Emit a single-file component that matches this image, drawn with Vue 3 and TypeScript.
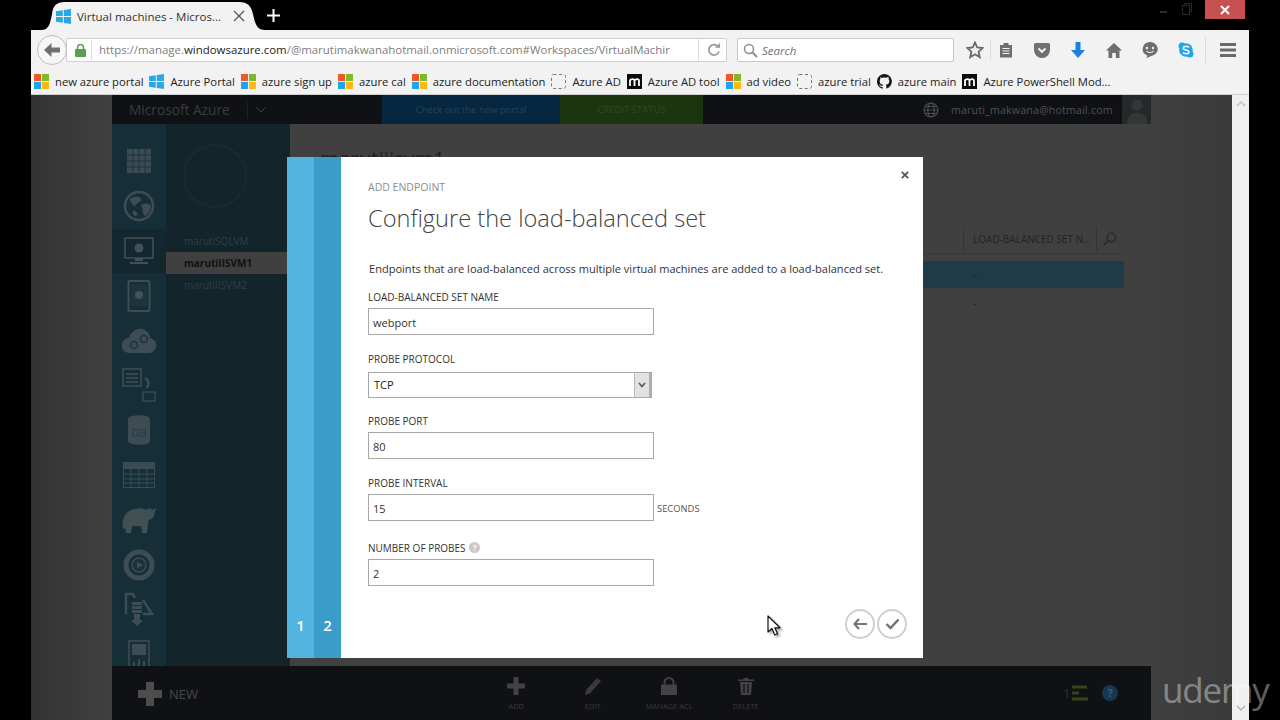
<script setup lang="ts">
interface Bookmark { icon: string; label: string }
const bookmarks: Bookmark[] = [
  { icon: 'ms', label: 'new azure portal' },
  { icon: 'win', label: 'Azure Portal' },
  { icon: 'ms', label: 'azure sign up' },
  { icon: 'ms', label: 'azure cal' },
  { icon: 'ms', label: 'azure documentation' },
  { icon: 'dash', label: 'Azure AD' },
  { icon: 'm', label: 'Azure AD tool' },
  { icon: 'ms', label: 'ad video' },
  { icon: 'dash', label: 'azure trial' },
  { icon: 'gh', label: 'azure main' },
  { icon: 'm', label: 'Azure PowerShell Mod...' },
]
const vms = ['marutiSQLVM', 'marutiIISVM1', 'marutiIISVM2']
</script>

<template>
  <div class="page">
    <div class="tabstrip">
      <div class="tab">
        <svg class="win" width="15" height="15" viewBox="0 0 15 15"><path fill="#29a8e8" d="M0 2.2 6.8 1.2V7H0zM7.8 1 15 0V7H7.8zM0 8H6.8V13.8L0 12.8zM7.8 8H15V15L7.8 14z" /></svg>
        <span class="tab-title">Virtual machines - Micros...</span>
        <svg class="tab-x" width="12" height="12" viewBox="0 0 12 12"><path d="M1 1 11 11M11 1 1 11" stroke="#555" stroke-width="1.3" /></svg>
      </div>
      <svg class="newtab" width="13" height="13" viewBox="0 0 13 13"><path d="M6.5 0V13M0 6.5H13" stroke="#fff" stroke-width="2" /></svg>
      <div class="winctl">
        <span class="min"></span>
        <svg class="restore" width="10" height="12" viewBox="0 0 10 12"><path d="M2.5 2.5V.5H9.5V9H7.5M.5 2.5H7.5V11.5H.5Z" fill="none" stroke="#2c2c2c" /></svg>
        <div class="close">
          <svg width="10" height="10" viewBox="0 0 10 10"><path d="M1 1 9 9M9 1 1 9" stroke="#fff" stroke-width="2" /></svg>
        </div>
      </div>
    </div>

    <div class="browser">
      <div class="toolbar">
        <div class="back">
          <svg width="16" height="14" viewBox="0 0 16 14"><path d="M7.5 0 0 7l7.500 7V9.500H16v-5H7.500z" fill="#6f6f6f" /></svg>
        </div>
        <div class="urlbar">
          <svg class="lock" width="11" height="13" viewBox="0 0 11 13"><path d="M2.500 5.500V3.500a3 3 0 0 1 6 0v2" fill="none" stroke="#57a04a" stroke-width="1.500" /><rect y="5" width="11" height="8" rx="1" fill="#57a04a" /></svg>
          <span class="url"><span class="url-dim">https://manage.</span><span class="url-dark">windowsazure.com</span><span class="url-dim">/@marutimakwanahotmail.onmicrosoft.com#Workspaces/VirtualMachir</span></span>
          <div class="reload">
            <svg width="14" height="14" viewBox="0 0 14 14"><path d="M11.500 4.200A5.200 5.200 0 1 0 12 8.500" fill="none" stroke="#9a9a9a" stroke-width="1.800" /><path d="M8 4.800h5V0z" fill="#9a9a9a" /></svg>
          </div>
        </div>
        <div class="searchbox">
          <svg width="15" height="15" viewBox="0 0 15 15"><circle cx="6" cy="6" r="4.500" fill="none" stroke="#8c8c8c" stroke-width="1.500" /><path d="M9.500 9.500 14 14" stroke="#8c8c8c" stroke-width="2" /></svg>
          <span>Search</span>
        </div>
        <div class="tools">
          <svg width="18" height="18" viewBox="0 0 18 18"><path d="M9 1.500 11.200 6.500 16.700 7 12.600 10.700 13.800 16.200 9 13.300 4.200 16.200 5.400 10.700 1.300 7 6.800 6.500Z" fill="none" stroke="#666" stroke-width="1.800" /></svg>
          <span class="tsep"></span>
          <svg class="t-clip" width="14" height="16" viewBox="0 0 14 16"><path d="M1 3H4.500V1H9.500V3H13V15.500H1Z" fill="#6e6e6e" /><path d="M3.500 6.500h7M3.500 9h7M3.500 11.500h7" stroke="#f2f2f2" /></svg>
          <svg class="t-pocket" width="16" height="15" viewBox="0 0 16 15"><path d="M1.500 0h13A1.500 1.500 0 0 1 16 1.500V7a8 8 0 0 1-16 0V1.500A1.500 1.500 0 0 1 1.500 0Z" fill="#707070" /><path d="M4.500 5.500 8 8.800 11.500 5.500" fill="none" stroke="#f2f2f2" stroke-width="2" /></svg>
          <svg class="t-dl" width="14" height="16" viewBox="0 0 14 16"><path d="M4.500 0h5v8H14L7 16 0 8h4.500z" fill="#1f7fe0" /></svg>
          <svg class="t-home" width="16" height="15" viewBox="0 0 16 15"><path d="M8 0 16 7.500H13.500V15H9.800V10H6.200V15H2.500V7.500H0Z" fill="#6e6e6e" /></svg>
          <svg class="t-chat" width="16" height="16" viewBox="0 0 16 16"><path d="M8 0a7.500 7 0 0 1 2 13.800L4.500 16l.7-2.600A7.500 7 0 0 1 8 0Z" fill="#6e6e6e" /><circle cx="5" cy="6" r="1.200" fill="#f2f2f2" /><circle cx="11" cy="6" r="1.200" fill="#f2f2f2" /><path d="M4.500 9c1.500 2 5.500 2 7 0" fill="none" stroke="#f2f2f2" stroke-width="1.200" /></svg>
          <svg class="t-skype" width="16" height="16" viewBox="0 0 16 16"><circle cx="8" cy="8" r="6.800" fill="#22a6e8" /><circle cx="4" cy="4" r="3.500" fill="#22a6e8" /><circle cx="12" cy="12" r="3.500" fill="#22a6e8" /><path d="M11 5.500C9.500 3.800 5.200 4 5.200 6.200 5.200 8.500 11 7.400 11 10 11 12.200 6.500 12.200 5 10.500" fill="none" stroke="#fff" stroke-width="1.500" /></svg>
          <span class="tsep tsep2"></span>
          <svg class="t-menu" width="16" height="14" viewBox="0 0 16 14"><path d="M0 0H16V3H0ZM0 5.500H16V8.500H0ZM0 11H16V14H0Z" fill="#6a6a6a" /></svg>
        </div>
      </div>

      <div class="bookmarks">
        <div v-for="b in bookmarks" :key="b.label" class="bm">
          <svg v-if="b.icon === 'ms'" width="15" height="15" viewBox="0 0 15 15"><rect width="7" height="7" fill="#f0582a" /><rect x="8" width="7" height="7" fill="#7cba2a" /><rect y="8" width="7" height="7" fill="#21a4ee" /><rect x="8" y="8" width="7" height="7" fill="#fdb913" /></svg>
          <svg v-else-if="b.icon === 'win'" width="15" height="15" viewBox="0 0 15 15"><path fill="#29a8e8" d="M0 2.200 6.800 1.200V7H0zM7.800 1 15 0V7H7.800zM0 8H6.800V13.800L0 12.800zM7.800 8H15V15L7.800 14z" /></svg>
          <svg v-else-if="b.icon === 'dash'" width="15" height="15" viewBox="0 0 15 15"><rect x=".5" y=".5" width="14" height="14" rx="2" fill="none" stroke="#777" stroke-dasharray="3 2.500" /></svg>
          <svg v-else-if="b.icon === 'm'" width="15" height="15" viewBox="0 0 15 15"><rect width="15" height="15" fill="#0b0b0b" /><path d="M3 12V5.500M3 6.500C4 4.500 7.500 4.500 7.500 7V12M7.500 7C8.500 4.500 12 4.500 12 7V12" fill="none" stroke="#fff" stroke-width="1.800" /></svg>
          <svg v-else width="15" height="15" viewBox="0 0 16 16"><path fill="#161616" d="M8 0a8 8 0 0 0-2.500 15.600c.4.100.5-.2.500-.4v-1.400c-2.200.5-2.700-1-2.700-1-.4-.9-.9-1.200-.9-1.200-.7-.5.100-.5.100-.5.800.1 1.200.8 1.200.8.700 1.200 1.900.9 2.300.7.100-.5.300-.9.500-1.100-1.800-.2-3.600-.9-3.600-4 0-.9.300-1.600.8-2.100-.1-.2-.4-1 .1-2.100 0 0 .7-.2 2.200.8a7.600 7.600 0 0 1 4 0c1.500-1 2.200-.8 2.200-.8.500 1.100.2 1.900.1 2.100.5.600.8 1.300.8 2.100 0 3.100-1.900 3.700-3.700 3.900.3.300.6.700.6 1.500v2.200c0 .2.100.5.600.4A8 8 0 0 0 8 0Z" /></svg>
          <span>{{ b.label }}</span>
        </div>
      </div>

      <div class="viewport">
        <div class="gutter gutter-l"></div>
        <div class="portal">
          <header class="azure-head">
            <span class="brand">Microsoft Azure</span>
            <span class="brand-sep"></span>
            <svg class="chev" width="10" height="6" viewBox="0 0 10 6"><path d="M.5.500 5 5 9.500.500" fill="none" stroke="#3a4a50" /></svg>
            <div class="promo promo-blue">Check out the new portal</div>
            <div class="promo promo-green">CREDIT STATUS</div>
            <div class="head-right">
              <svg width="16" height="16" viewBox="0 0 16 16"><g fill="none" stroke="#4a4c4e" stroke-width="1.200"><circle cx="8" cy="8" r="7" /><ellipse cx="8" cy="8" rx="3.200" ry="7" /><path d="M1 8H15M2 4.500H14M2 11.500H14" /></g></svg>
              <span class="email">maruti_makwana@hotmail.com</span>
              <div class="avatar">
                <svg width="24" height="28" viewBox="0 0 24 28"><circle cx="12" cy="9" r="5.500" fill="#343738" /><path d="M2 28c0-9 4-11 10-11s10 2 10 11z" fill="#343738" /></svg>
              </div>
            </div>
          </header>

          <div class="portal-main">
            <nav class="nav">
              <div class="nav-item">
                <svg width="26" height="26" viewBox="0 0 28 28"><path fill="#4d5a5e" d="M1 1h26v26H1z" /><path d="M7.500 1v26M14 1v26M20.500 1v26M1 7.500h26M1 14h26M1 20.500h26" stroke="#1b3540" /></svg>
              </div>
              <div class="nav-item">
                <svg width="32" height="32" viewBox="0 0 32 32"><circle cx="16" cy="16" r="14" fill="none" stroke="#505d61" stroke-width="2.500" /><path fill="#505d61" d="M7 9c4-3 9-3 11 0 1 3-4 3-5 6-2 2-5-1-6-6ZM18 15c3-2 8-2 10 1 0 4-3 9-6 10-3-2-2-7-4-11ZM10 21c2-1 4 1 5 4l-3 1c-2-1-3-3-2-5Z" /></svg>
              </div>
              <div class="nav-item nav-active">
                <svg width="30" height="28" viewBox="0 0 30 28"><rect x="1" y="1" width="28" height="20" fill="none" stroke="#59666a" stroke-width="1.500" /><circle cx="15" cy="11" r="4.500" fill="#59666a" /><path d="M11 21h8v3h-8zM6 25h18v2H6z" fill="#59666a" /></svg>
              </div>
              <div class="nav-item">
                <svg width="24" height="32" viewBox="0 0 24 32"><rect x="1.500" y="1" width="21" height="30" rx="1.500" fill="none" stroke="#505d61" stroke-width="2" /><rect x="4" y="4" width="16" height="22" fill="#22383f" /><circle cx="12" cy="15" r="4" fill="#59666a" /></svg>
              </div>
              <div class="nav-item">
                <svg width="36" height="28" viewBox="0 0 36 28"><path fill="#505d61" d="M9 26C3 26 0 22 1 17 2 13 5 11 8 11 10 5 15 1 21 2 26 3 29 7 29 11 33 12 36 15 35 20 34 24 31 26 27 26Z" /><circle cx="13" cy="18" r="3.500" fill="none" stroke="#1b3540" stroke-width="1.500" /><circle cx="23" cy="12" r="3.500" fill="none" stroke="#1b3540" stroke-width="1.500" /></svg>
              </div>
              <div class="nav-item">
                <svg width="34" height="34" viewBox="0 0 34 34"><rect x="1" y="1" width="18" height="17" fill="none" stroke="#505d61" stroke-width="1.500" /><path d="M4 6h12M4 10h12M4 14h12" stroke="#505d61" stroke-width="1.500" /><rect x="21" y="24" width="12" height="9" fill="none" stroke="#505d61" stroke-width="1.300" /><path d="M23 10c4 2 4 6 2 10" fill="none" stroke="#505d61" stroke-width="2.500" /></svg>
              </div>
              <div class="nav-item">
                <svg width="24" height="32" viewBox="0 0 24 32"><path fill="#4e5b5f" d="M1 5c0-5 22-5 22 0v22c0 5-22 5-22 0Z" /><text x="12" y="23" text-anchor="middle" class="db">DB</text></svg>
              </div>
              <div class="nav-item">
                <svg width="32" height="26" viewBox="0 0 32 26"><rect x=".5" y=".5" width="31" height="25" fill="none" stroke="#4d5a5e" /><rect x="1" y="1" width="30" height="6" fill="#4d5a5e" /><path d="M1 12h30M1 17h30M1 21h30M8 7v18M16 7v18M24 7v18" stroke="#4d5a5e" /></svg>
              </div>
              <div class="nav-item">
                <svg width="36" height="30" viewBox="0 0 36 30"><path fill="#56615f" d="M2 24C0 14 5 5 14 4 18 3 22 3 25 5 27 3 30 3 31 5L35 3 33 10C33 13 30 14 28 15L27 17 26 28H21L20 21H11L10 28H5L4 23Z" /></svg>
              </div>
              <div class="nav-item">
                <svg width="32" height="32" viewBox="0 0 32 32"><circle cx="16" cy="16" r="13" fill="none" stroke="#505d61" stroke-width="5" /><circle cx="16" cy="16" r="7" fill="#1b3540" stroke="#505d61" stroke-width="1.500" /><path d="M14 12.500 20 16l-6 3.500z" fill="#505d61" /></svg>
              </div>
              <div class="nav-item">
                <svg width="30" height="34" viewBox="0 0 30 34"><path fill="none" stroke="#505d61" stroke-width="2.500" d="M2 22V2H9L11 6M19 8 28 22H19" /><path fill="#505d61" d="M8 10h10v3H8zM8 14h10v3H8zM8 18h10v3H8zM10 22h6v6h3l-6 6-6-6h3z" /></svg>
              </div>
              <div class="nav-item">
                <svg width="22" height="28" viewBox="0 0 22 28"><rect x="1" y="1" width="20" height="27" fill="none" stroke="#505d61" stroke-width="1.500" /><rect x="4" y="4" width="14" height="11" fill="#505d61" /><path d="M6 26v-4M11 26v-7M16 26v-5" stroke="#505d61" stroke-width="2" /></svg>
              </div>
            </nav>

            <aside class="sublist">
              <div class="ring"></div>
              <div class="vm-list">
                <div v-for="vm in vms" :key="vm" class="vm" :class="{ 'vm-on': vm === 'marutiIISVM1' }">{{ vm }}</div>
              </div>
            </aside>

            <main class="content">
              <h1 class="vm-title">marutiiisvm1</h1>
              <div class="thead">
                <span class="th-cell">LOAD-BALANCED SET N...</span>
                <svg width="14" height="14" viewBox="0 0 14 14"><circle cx="8.500" cy="5.500" r="4.200" fill="none" stroke="#2a2a2a" stroke-width="1.500" /><path d="M5.500 8.500 1 13" stroke="#2a2a2a" stroke-width="2.200" /></svg>
              </div>
              <div class="trow trow-on"><span>-</span></div>
              <div class="trow"><span>-</span></div>
            </main>
          </div>

          <footer class="actionbar">
            <div class="new">
              <svg width="24" height="24" viewBox="0 0 24 24"><path d="M8 0h8v8h8v8h-8v8H8v-8H0V8h8z" fill="#4d4d4e" /></svg>
              <span>NEW</span>
            </div>
            <div class="actions">
              <div class="action action-add">
                <svg width="18" height="18" viewBox="0 0 18 18"><path d="M6.500 0h5v6.500H18v5h-6.500V18h-5v-6.500H0v-5h6.500z" fill="#434345" /></svg>
                <span>ADD</span>
              </div>
              <div class="action action-edit">
                <svg width="18" height="18" viewBox="0 0 18 18"><path d="M13 1 17 4 6 16.500 1 18 2 13Z" fill="#3a3a3c" /></svg>
                <span>EDIT</span>
              </div>
              <div class="action action-acl">
                <svg width="18" height="18" viewBox="0 0 18 18"><path d="M4.500 8V5.500a4.500 4.500 0 0 1 9 0V8" fill="none" stroke="#434345" stroke-width="2" /><rect x="1" y="7.500" width="16" height="10.500" fill="#434345" /></svg>
                <span>MANAGE ACL</span>
              </div>
              <div class="action action-del">
                <svg width="16" height="18" viewBox="0 0 16 18"><path d="M0 2.500h5.500V1h5v1.500H16V4H0zM2 5h12l-1 13H3z" fill="#434345" /><path d="M6 7v9M10 7v9" stroke="#101114" stroke-width="1.300" /></svg>
                <span>DELETE</span>
              </div>
            </div>
            <div class="foot-right">
              <span class="count">1</span>
              <svg width="16" height="16" viewBox="0 0 16 16"><path d="M0 2h15M0 8h7M0 14h16" stroke="#38451c" stroke-width="3" /></svg>
              <span class="help">?</span>
            </div>
          </footer>
        </div>
        <div class="gutter gutter-r"></div>
        <div class="scrollbar">
          <svg width="10" height="6" viewBox="0 0 10 6"><path d="M1 5 5 1l4 4" fill="none" stroke="#c4c4c4" stroke-width="1.500" /></svg>
          <svg width="10" height="6" viewBox="0 0 10 6"><path d="M1 1l4 4 4-4" fill="none" stroke="#b4b4b4" stroke-width="1.500" /></svg>
        </div>

        <section class="modal">
          <div class="step step-1"><span>1</span></div>
          <div class="step step-2"><span>2</span></div>
          <div class="modal-body">
            <button class="modal-x" type="button" aria-label="Close">
              <svg width="8" height="8" viewBox="0 0 8 8"><path d="M.8.800 7.200 7.200M7.200.800.800 7.200" stroke="#555" stroke-width="1.800" /></svg>
            </button>
            <div class="eyebrow">ADD ENDPOINT</div>
            <h2 class="heading">Configure the load-balanced set</h2>
            <p class="lead">Endpoints that are load-balanced across multiple virtual machines are added to a load-balanced set.</p>

            <div class="field">
              <label>LOAD-BALANCED SET NAME</label>
              <div class="input">webport</div>
            </div>
            <div class="field field-select">
              <label>PROBE PROTOCOL</label>
              <div class="select">
                <span class="select-val">TCP</span>
                <span class="select-btn">
                  <svg width="8" height="6" viewBox="0 0 8 6"><path d="M1 1 4 4.500 7 1" fill="none" stroke="#555" stroke-width="1.600" /></svg>
                </span>
              </div>
            </div>
            <div class="field">
              <label>PROBE PORT</label>
              <div class="input">80</div>
            </div>
            <div class="field field-wide">
              <label>PROBE INTERVAL</label>
              <div class="input-row">
                <div class="input">15</div>
                <span class="unit">SECONDS</span>
              </div>
            </div>
            <div class="field">
              <label class="label-help">NUMBER OF PROBES <span class="q">?</span></label>
              <div class="input">2</div>
            </div>

            <div class="modal-foot">
              <button class="round" type="button" aria-label="Back">
                <svg width="14" height="12" viewBox="0 0 14 12"><path d="M6 1 1.500 6 6 11M2 6H14" fill="none" stroke="#777" stroke-width="2.200" /></svg>
              </button>
              <button class="round" type="button" aria-label="Finish">
                <svg width="15" height="12" viewBox="0 0 15 12"><path d="M1.500 6 5.500 10 13.500 1.500" fill="none" stroke="#6f6f6f" stroke-width="2.400" /></svg>
              </button>
            </div>
          </div>
        </section>

        <svg class="cursor" width="16" height="22" viewBox="0 0 16 22"><path d="M1 1V17L5 13.500 7.800 20 10.500 18.800 7.800 12.800H13Z" fill="#fff" stroke="#111" stroke-width="1.200" stroke-linejoin="round" /></svg>
      </div>
    </div>
    <div class="watermark">udemy</div>
  </div>
</template>

<style scoped>
.page { position: relative; width: 1280px; height: 720px; overflow: hidden; background: #000; font-family: "Open Sans", "Liberation Sans", sans-serif; display: flex; flex-direction: column; }
.tabstrip { height: 30px; display: flex; align-items: flex-start; padding-left: 41px; flex: none; }
.tab { width: 224px; height: 30px; display: flex; align-items: center; padding: 2px 0 0 15px; box-sizing: border-box; background: #f2f2f2; clip-path: path("M0 30C8 30 9 24 11 14 12 6 15 2 24 2H198C207 2 210 6 212 14 214 24 216 30 224 30Z"); }
.win { flex: none; }
.tab-title { margin-left: 6px; font-size: 11.500px; color: #333; white-space: nowrap; width: 156px; }
.tab-x { margin-left: 0; }
.newtab { margin: 9px 0 0 2px; }
.winctl { margin-left: auto; margin-right: 35px; display: flex; align-items: flex-start; }
.min { width: 7px; height: 2px; background: #2c2c2c; margin: 11px 15px 0 0; }
.restore { margin: 3px 13px 0 0; }
.close { width: 40px; height: 19px; background: #c75050; display: flex; align-items: center; justify-content: center; }

.browser { width: 1218px; height: 690px; margin-left: 31px; position: relative; background: #f2f2f2; display: flex; flex-direction: column; overflow: hidden; }
.toolbar { height: 38px; flex: none; display: flex; align-items: flex-start; padding: 8px 0 0 6px; box-sizing: border-box; position: relative; }
.back { width: 30px; height: 30px; margin-top: -3px; border-radius: 50%; border: 1px solid #bdbdbd; box-sizing: border-box; background: #f6f6f6; display: flex; align-items: center; justify-content: center; flex: none; z-index: 1; }
.urlbar { width: 661px; height: 24px; margin-left: -1px; padding-left: 8px; box-sizing: border-box; border: 1px solid #cfcfcf; border-radius: 2px; background: #fff; display: flex; align-items: center; flex: none; }
.lock { flex: none; }
.url { margin-left: 5px; padding-left: 7px; border-left: 1px solid #dcdcdc; font-size: 11.450px; line-height: 20px; color: #7d7d7d; white-space: nowrap; width: 573px; overflow: hidden; box-sizing: content-box; flex: none; }
.url-dark { color: #222; }
.reload { width: 30px; height: 22px; margin-left: 26px; box-sizing: border-box; border-left: 1px solid #dcdcdc; display: flex; align-items: center; justify-content: center; flex: none; }
.searchbox { width: 217px; height: 24px; margin-left: 10px; padding-left: 5px; box-sizing: border-box; border: 1px solid #c8c8c8; border-radius: 2px; background: #fff; display: flex; align-items: center; gap: 4px; color: #6f6f6f; font-size: 11.500px; font-style: italic; flex: none; }
.tools { display: flex; align-items: center; height: 24px; margin-left: 12px; flex: none; }
.tsep { width: 1px; height: 20px; background: #dadada; margin: 0 8px 0 6px; }
.t-clip { margin-right: 21px; }
.t-pocket { margin-right: 21px; }
.t-dl { margin-right: 21px; }
.t-home { margin-right: 20px; }
.t-chat { margin-right: 20px; }
.t-skype { margin-right: 0; }
.tsep2 { margin: 0 14px 0 11px; height: 26px; }

.bookmarks { flex: none; border-bottom: 1px solid #cfcfcf; display: flex; align-items: center; gap: 6px; padding: 1px 0 0 3px; box-sizing: border-box; height: 27px; font-size: 11.250px; color: #222; }
.bm { display: flex; align-items: center; gap: 6px; white-space: nowrap; }
.bm svg { flex: none; }

.viewport { position: relative; flex: 1; display: flex; min-height: 0; background: #3f3f3f; }
.gutter { width: 81px; flex: none; }
.gutter-l { background: linear-gradient(90deg, #333 0, #404040 100%); }
.gutter-r { background: linear-gradient(90deg, #3f3f3f 0, #3a3a3a 100%); }
.portal { width: 1039px; flex: none; display: flex; flex-direction: column; background: #404040; }
.azure-head { height: 29px; flex: none; background: #101115; display: flex; align-items: center; position: relative; }
.brand { margin-left: 17px; font-size: 13.700px; color: #393c3f; width: 103px; white-space: nowrap; }
.brand-sep { width: 1px; height: 16px; background: #1e2024; margin-left: 15px; }
.chev { margin-left: 8px; }
.promo { height: 29px; display: flex; align-items: center; justify-content: center; font-size: 9.500px; flex: none; }
.promo-blue { margin-left: 116px; width: 178px; background: #072741; color: #284358; }
.promo-green { width: 143px; background: #1b350f; color: #304a25; }
.head-right { margin-left: auto; display: flex; align-items: center; }
.email { margin-left: 12px; font-size: 10.600px; color: #4e5154; width: 161px; white-space: nowrap; letter-spacing: .2px; }
.avatar { width: 29px; height: 29px; margin-left: 10px; background: #26292a; display: flex; align-items: flex-end; justify-content: center; }

.portal-main { flex: 1; min-height: 0; display: flex; }
.nav { width: 54px; flex: none; background: #162e38; display: flex; flex-direction: column; overflow: hidden; padding-top: 15px; box-sizing: border-box; }
.nav-item { height: 44.800px; flex: none; display: flex; align-items: center; justify-content: center; }
.nav-item svg { opacity: .68; }
.nav-active { background: #13272f; }
.db { font: 11px "Open Sans", sans-serif; fill: #2a4248; }
.sublist { width: 124px; flex: none; background: #13242b; position: relative; }
.ring { position: absolute; left: 17px; top: 20px; width: 64px; height: 64px; border-radius: 50%; border: 2px solid #182b33; box-sizing: border-box; }
.vm-list { padding-top: 106px; }
.vm { height: 22px; line-height: 22px; padding-left: 18px; font-size: 10px; color: #2b424c; }
.vm-on { background: #404040; color: #111; font-weight: 700; }
.content { flex: 1; min-width: 0; padding: 19px 27px 0 30px; box-sizing: border-box; color: #222; }
.vm-title { margin: 0 0 52px; font-size: 20.500px; line-height: 30px; font-weight: 400; color: #1f1f1f; }
.thead { height: 28px; display: flex; align-items: center; justify-content: flex-end; gap: 6px; padding-right: 7px; border-bottom: 2px solid #3b3b3b; font-size: 10px; color: #222; white-space: nowrap; }
.th-cell { padding: 5px 5px 5px 9px; border-left: 1px solid #353535; border-right: 1px solid #353535; white-space: nowrap; }
.trow { height: 27px; display: flex; align-items: center; padding-left: 653px; font-size: 11px; color: #222; }
.trow-on { background: #1f3b48; margin-top: 6px; margin-bottom: 1px; }

.actionbar { height: 54px; flex: none; background: #101114; display: flex; position: relative; }
.new { display: flex; align-items: center; margin-left: 26px; gap: 7px; font-size: 13px; color: #47484a; height: 56px; }
.actions { display: flex; margin-left: 280px; }
.action { display: flex; flex-direction: column; align-items: center; padding-top: 11px; gap: 5px; font-size: 7.500px; color: #38393b; width: 76.500px; line-height: 12px; }
.foot-right { display: flex; align-items: center; margin-left: auto; margin-right: 33px; color: #2f3a1e; font-size: 12px; gap: 2px; }
.help { width: 16px; height: 16px; margin-left: 12px; border-radius: 50%; background: #143752; color: #3f6080; font-size: 11px; line-height: 16px; text-align: center; font-weight: 700; }

.scrollbar { width: 17px; flex: none; background: #f0f0f0; display: flex; flex-direction: column; justify-content: space-between; align-items: center; padding: 6px 0 9px; box-sizing: border-box; }

.modal { position: absolute; left: 256px; top: 62px; width: 636px; height: 501px; display: flex; background: #fff; color: #333; }
.step { width: 27px; flex: none; display: flex; align-items: flex-end; justify-content: center; padding-bottom: 24px; box-sizing: border-box; color: #fff; font-size: 15px; font-weight: 600; line-height: 18px; }
.step-1 { background: #54b4e0; }
.step-2 { background: #3a9cca; }
.modal-body { flex: 1; position: relative; display: flex; flex-direction: column; padding: 22px 16px 19px 27px; box-sizing: border-box; min-width: 0; }
.modal-x { position: absolute; top: 14px; right: 14px; width: 8px; height: 8px; padding: 0; border: 0; background: none; display: flex; }
.eyebrow { font-size: 10.500px; line-height: 16px; color: #8c8c8c; }
.heading { margin: 6px 0 0; font-size: 23.600px; line-height: 34px; font-weight: 300; color: #444; white-space: nowrap; }
.lead { margin: 26px 0 0 1px; font-size: 11.050px; line-height: 16px; color: #333; white-space: nowrap; }
.field { margin-top: 12px; margin-bottom: 4px; }
.field + .field { margin-top: 12px; }
.field-wide { margin-bottom: 7px; }
.field label { display: block; font-size: 10px; line-height: 16px; color: #333; margin-bottom: 3px; }
.label-help { white-space: nowrap; }
.q { display: inline-block; width: 11px; height: 11px; margin-left: 1px; border-radius: 50%; background: #c8c8c8; color: #fff; font-size: 8px; line-height: 11px; text-align: center; vertical-align: 1px; font-weight: 700; }
.input { width: 286px; height: 27px; box-sizing: border-box; border: 1px solid #a8a8a8; padding-left: 4px; font-size: 11px; line-height: 27px; color: #333; background: #fff; flex: none; }
.field-select label { margin-bottom: 5px; }
.select { width: 284px; height: 26px; box-sizing: border-box; border: 1px solid #a8a8a8; padding-left: 5px; font-size: 11px; color: #222; display: flex; align-items: center; justify-content: space-between; }
.select-val { margin-top: -2px; }
.select-btn { width: 17px; height: 24px; background: #e2e2e2; border-left: 1px solid #bbb; border-right: 2px solid #b0b0b0; box-sizing: border-box; display: flex; align-items: center; justify-content: center; }
.field-select { margin-bottom: 3px; }
.input-row { display: flex; align-items: center; }
.unit { margin: 2px 0 0 3px; font-size: 9.400px; color: #555; }
.modal-foot { margin-top: auto; display: flex; justify-content: flex-end; gap: 2px; }
.round { width: 30px; height: 30px; padding: 0; border: 2px solid #cfcfcf; border-radius: 50%; background: #fff; display: flex; align-items: center; justify-content: center; box-sizing: border-box; }

.cursor { position: absolute; left: 736px; top: 520px; filter: drop-shadow(2px 2px 1px rgba(0,0,0,.35)); }
.watermark { position: absolute; left: 1162px; top: 664px; font-size: 35px; line-height: 52px; font-weight: 400; letter-spacing: -1.200px; color: rgba(255,255,255,.4); pointer-events: none; white-space: nowrap; }
</style>
